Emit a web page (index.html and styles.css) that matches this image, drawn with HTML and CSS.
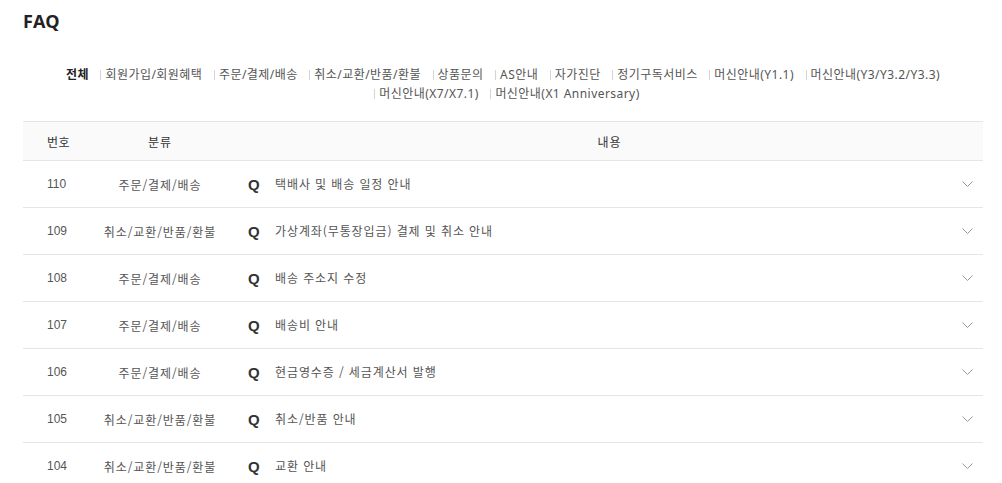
FILE: index.html
```html
<!DOCTYPE html>
<html lang="ko">
<head>
  <meta charset="UTF-8">
  <title>FAQ</title>
  <link rel="stylesheet" href="styles.css">
</head>
<body>
  <div class="wrap">
    <h1 class="title">FAQ</h1>

    <ul class="filters">
      <li class="on">전체</li>
      <li>회원가입/회원혜택</li>
      <li>주문/결제/배송</li>
      <li>취소/교환/반품/환불</li>
      <li>상품문의</li>
      <li>AS안내</li>
      <li>자가진단</li>
      <li>정기구독서비스</li>
      <li>머신안내(Y1.1)</li>
      <li>머신안내(Y3/Y3.2/Y3.3)</li>
      <li>머신안내(X7/X7.1)</li>
      <li>머신안내(X1 Anniversary)</li>
    </ul>

    <div class="faq">
      <div class="row head">
        <div class="num">번호</div>
        <div class="cat">분류</div>
        <div class="subject">내용</div>
      </div>

      <div class="row">
        <div class="num">110</div>
        <div class="cat">주문/결제/배송</div>
        <div class="subject"><span class="q">Q</span>택배사 및 배송 일정 안내</div>
        <svg class="arrow" width="11" height="7" viewBox="0 0 11 7"><polyline points="0.5,0.5 5.5,5.5 10.5,0.5" /></svg>
      </div>
      <div class="row">
        <div class="num">109</div>
        <div class="cat">취소/교환/반품/환불</div>
        <div class="subject"><span class="q">Q</span>가상계좌(무통장입금) 결제 및 취소 안내</div>
        <svg class="arrow" width="11" height="7" viewBox="0 0 11 7"><polyline points="0.5,0.5 5.5,5.5 10.5,0.5" /></svg>
      </div>
      <div class="row">
        <div class="num">108</div>
        <div class="cat">주문/결제/배송</div>
        <div class="subject"><span class="q">Q</span>배송 주소지 수정</div>
        <svg class="arrow" width="11" height="7" viewBox="0 0 11 7"><polyline points="0.5,0.5 5.5,5.5 10.5,0.5" /></svg>
      </div>
      <div class="row">
        <div class="num">107</div>
        <div class="cat">주문/결제/배송</div>
        <div class="subject"><span class="q">Q</span>배송비 안내</div>
        <svg class="arrow" width="11" height="7" viewBox="0 0 11 7"><polyline points="0.5,0.5 5.5,5.5 10.5,0.5" /></svg>
      </div>
      <div class="row">
        <div class="num">106</div>
        <div class="cat">주문/결제/배송</div>
        <div class="subject"><span class="q">Q</span>현금영수증 / 세금계산서 발행</div>
        <svg class="arrow" width="11" height="7" viewBox="0 0 11 7"><polyline points="0.5,0.5 5.5,5.5 10.5,0.5" /></svg>
      </div>
      <div class="row">
        <div class="num">105</div>
        <div class="cat">취소/교환/반품/환불</div>
        <div class="subject"><span class="q">Q</span>취소/반품 안내</div>
        <svg class="arrow" width="11" height="7" viewBox="0 0 11 7"><polyline points="0.5,0.5 5.5,5.5 10.5,0.5" /></svg>
      </div>
      <div class="row">
        <div class="num">104</div>
        <div class="cat">취소/교환/반품/환불</div>
        <div class="subject"><span class="q">Q</span>교환 안내</div>
        <svg class="arrow" width="11" height="7" viewBox="0 0 11 7"><polyline points="0.5,0.5 5.5,5.5 10.5,0.5" /></svg>
      </div>
    </div>
  </div>
</body>
</html>
```

FILE: styles.css
```css
body {
  margin: 0;
  background: #fff;
  font-family: "Liberation Sans", "Noto Sans CJK KR", sans-serif;
  color: #555;
}

.wrap {
  width: 960px;
  margin-left: 23px;
}

.title {
  margin: 9px 0 0;
  font-family: "Open Sans", "Noto Sans CJK KR", sans-serif;
  font-size: 18px;
  line-height: 24px;
  font-weight: 700;
  color: #222;
}

.filters {
  list-style: none;
  margin: 32px 0 0;
  padding: 0 30px;
  text-align: center;
  font-family: "Noto Sans", "Noto Sans CJK KR", sans-serif;
  font-size: 12px;
  line-height: 19px;
  letter-spacing: 0.45px;
  color: #555;
}

.filters li {
  display: inline-block;
}

.filters li + li::before {
  content: "";
  display: inline-block;
  width: 1px;
  height: 10px;
  margin: 0 4px 0 8px;
  background: #d5d5d5;
  vertical-align: -1px;
}

.filters li.on {
  font-weight: 700;
  color: #222;
}

.faq {
  margin-top: 18px;
  border-top: 1px solid #e5e5e5;
}

.row {
  display: grid;
  grid-template-columns: 80px 114px 1fr 40px;
  align-items: center;
  height: 46px;
  border-bottom: 1px solid #e5e5e5;
  font-size: 12px;
}

.row.head {
  height: 38px;
  background: #fafafa;
  color: #333;
  font-family: "Noto Sans CJK KR", sans-serif;
}

.num {
  padding-left: 24px;
}

.head .num {
  letter-spacing: 0.5px;
}

.cat {
  text-align: center;
  font-family: "Noto Sans CJK KR", sans-serif;
  letter-spacing: 0.9px;
}

.subject {
  padding-left: 31px;
  font-family: "Noto Sans CJK KR", sans-serif;
  letter-spacing: 0.9px;
}

.head .subject {
  grid-column: 3 / 5;
  padding-left: 0;
  text-align: center;
  margin-left: 19px;
}

.q {
  display: inline-block;
  width: 27px;
  font-family: "Liberation Sans", sans-serif;
  font-size: 15px;
  font-weight: 700;
  letter-spacing: 0;
  color: #333;
  vertical-align: -1px;
}

.arrow {
  justify-self: start;
  margin-left: 19px;
  fill: none;
  stroke: #999;
  stroke-width: 1;
}
```
